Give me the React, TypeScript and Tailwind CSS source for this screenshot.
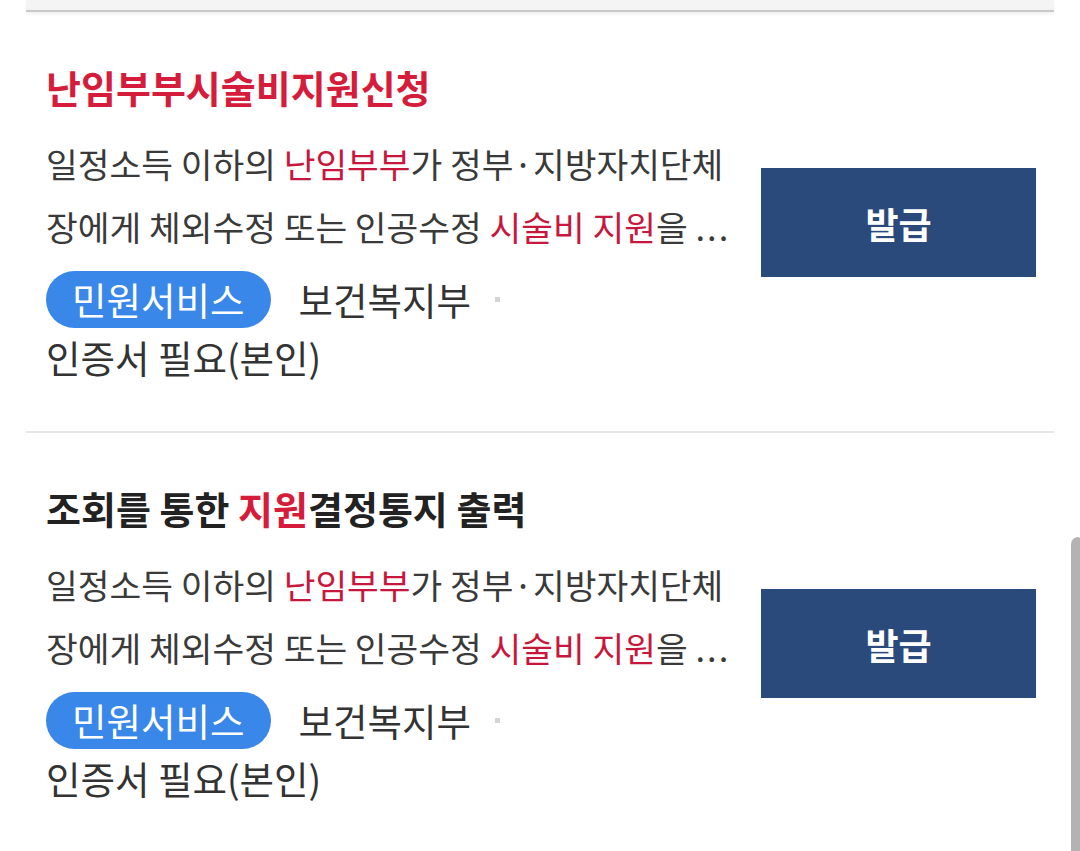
import React from 'react'

interface Item { title: React.ReactNode }

const items: Item[] = [
  { title: <span className="text-[#d61c3b]">난임부부시술비지원신청</span> },
  {
    title: (
      <>
        조회를 통한 <span className="text-[#d61c3b]">지원</span>결정통지 출력
      </>
    ),
  },
]

function ResultItem({ title, last }: { title: React.ReactNode; last?: boolean }) {
  return (
    <div className={`flex items-center pl-5 pr-[18px] pt-[51px] pb-[49px] ${last ? '' : 'border-b-2 border-[#e6e6e6]'}`}>
      <div className="flex-1 min-w-0">
        <h3 className="text-[38px] leading-[48px] font-bold text-[#222]">{title}</h3>
        <p className="mt-[21px] text-[34.5px] leading-[63px] text-[#3a3a3a] whitespace-nowrap">
          <span className="block">
            일정소득 이하의 <span className="text-[#c8173d]">난임부부</span>가 정부·지방자치단체
          </span>
          <span className="block">
            장에게 체외수정 또는 인공수정 <span className="text-[#c8173d]">시술비 지원</span>을{' '}
            <span className="tracking-[2px]">...</span>
          </span>
        </p>
        <div className="mt-[13px] flex items-center">
          <span className="inline-flex h-[57px] items-center rounded-full bg-[#3987e8] px-[26px] text-[37.5px] text-white">
            민원서비스
          </span>
          <span className="ml-[28px] text-[37.5px] text-[#333]">보건복지부</span>
          <span className="ml-[24px] h-[5px] w-[5px] bg-[#d4d4d4]" />
        </div>
        <p className="text-[37.5px] leading-[50px] mt-[4px] text-[#333]">인증서 필요(본인)</p>
      </div>
      <button className="ml-[22px] h-[109px] w-[275px] shrink-0 bg-[#2a4a7c] text-[36px] font-bold text-white">
        발급
      </button>
    </div>
  )
}

export default function App() {
  return (
    <div
      className="relative h-[851px] w-[1080px] overflow-hidden bg-white"
      style={{ fontFamily: '"Noto Sans CJK KR", "Noto Sans", sans-serif' }}
    >
      <div className="mx-[26px]">
        <div className="h-[12px] bg-[#f4f4f4] border-b-2 border-[#c9c9c9] shadow-[0_2px_3px_rgba(0,0,0,0.06)]" />
        {items.map((it, i) => (
          <ResultItem key={i} title={it.title} last={i === items.length - 1} />
        ))}
      </div>
      <div className="absolute right-0 top-[537px] bottom-0 w-[9px] rounded-tl-[8px] rounded-tr-[2px] bg-[#b3b3b3]" />
    </div>
  )
}
